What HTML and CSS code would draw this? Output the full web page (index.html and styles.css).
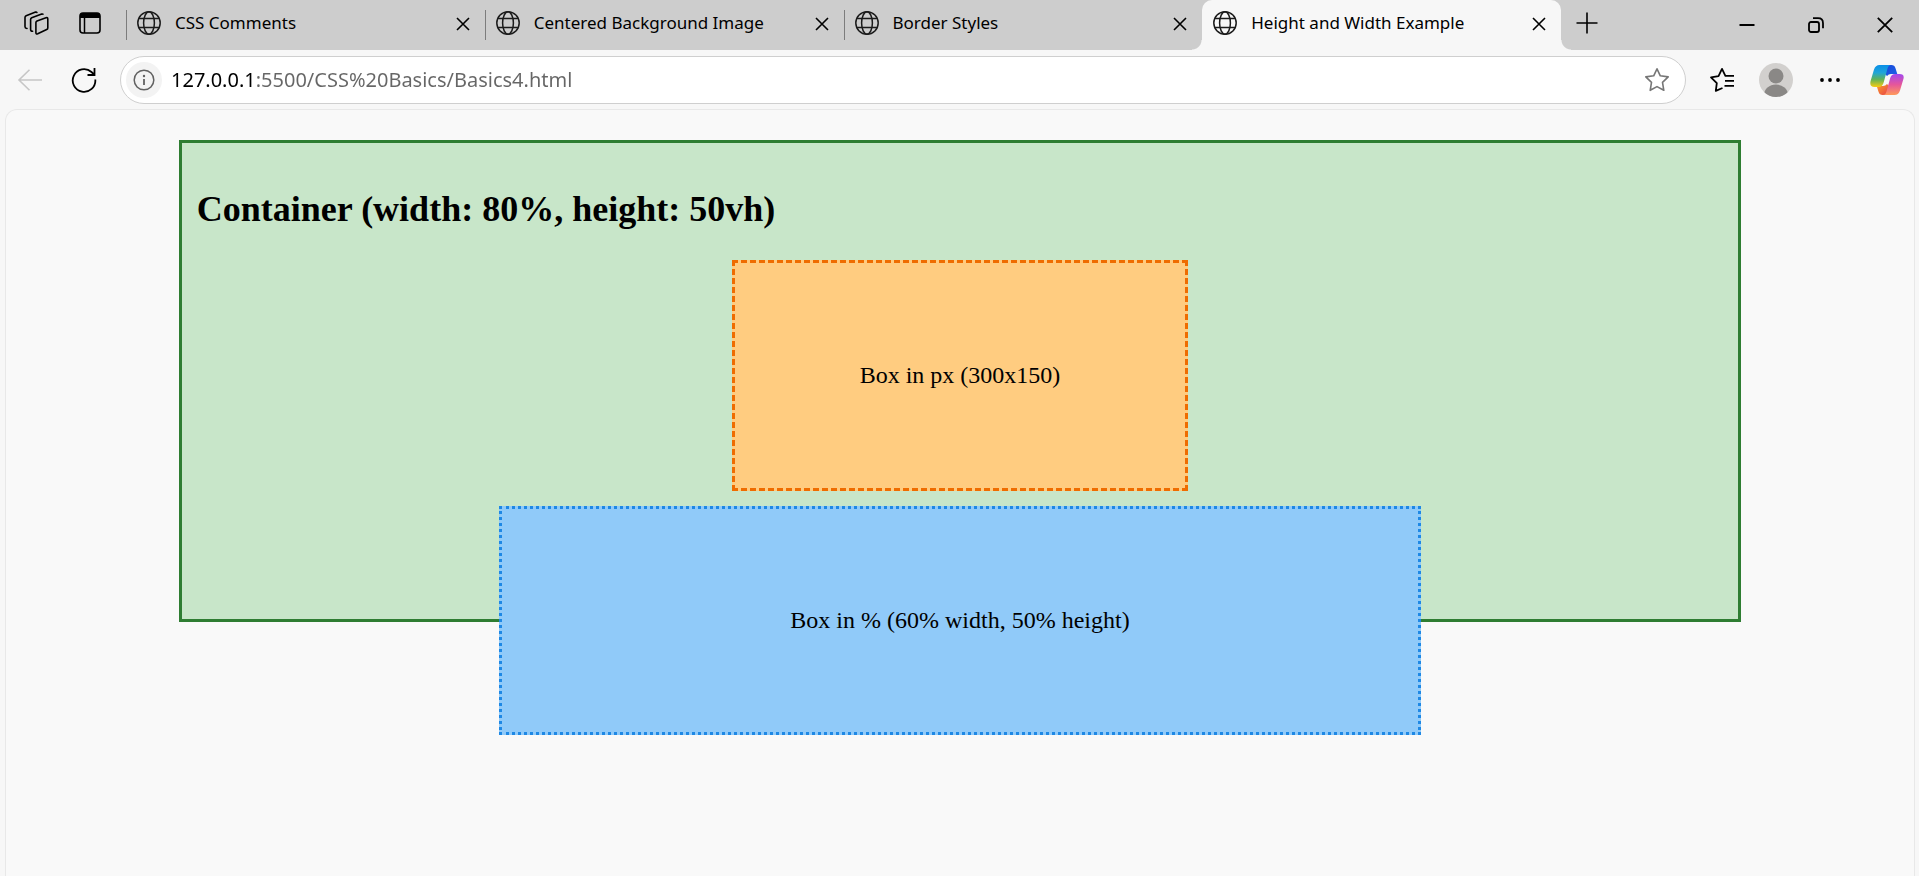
FILE: index.html
```html
<!DOCTYPE html>
<html lang="en">
<head>
<meta charset="utf-8">
<title>Height and Width Example</title>
<link rel="stylesheet" href="styles.css">
</head>
<body>
<svg class="defs" aria-hidden="true">
  <symbol id="globe" viewBox="0 0 24 24"><g fill="none" stroke="currentColor" stroke-width="1.5"><circle cx="12" cy="12" r="11.2"/><ellipse cx="12" cy="12" rx="5.4" ry="11.2"/><path d="M1.8 7.6h20.4M1.8 16.4h20.4"/></g></symbol>
  <symbol id="cross" viewBox="0 0 14 14"><path d="M1 1l12 12M13 1L1 13" fill="none" stroke="currentColor" stroke-width="1.6"/></symbol>
</svg>
<header class="tabstrip">
  <div class="tools">
    <button class="tool" aria-label="Workspaces"><svg width="26" height="26" viewBox="0 0 26 26" fill="none" stroke="currentColor" stroke-width="1.6" stroke-linejoin="round" stroke-linecap="round"><path d="M12.9 12.6q0-1.2 1.1-1.7l9-3.200q1.800-.5 1.800 1.200v9q0 1.200-1.100 1.700l-9 4.200q-1.800.6-1.800-1.200z"/><path d="M9.600 21.300q-2-.1-2-1.800v-10q0-1.200 1.100-1.700l10-3.700q.8-.2 1.200.1"/><path d="M4 18.500q-2-.3-2-1.800v-9.200q0-1.200 1.100-1.700l9.500-3.700q.9-.2 1.300.3"/></svg></button>
    <button class="tool" aria-label="Tab actions"><svg width="22" height="22" viewBox="0 0 22 22"><rect x="1" y="1" width="20" height="20" rx="3" fill="none" stroke="currentColor" stroke-width="1.6"/><path d="M1 6V4q0-3 3-3h14q3 0 3 3v2z" fill="currentColor"/><path d="M5.500 6v15" stroke="currentColor" stroke-width="1.5"/></svg></button>
  </div>
  <nav class="tabs" aria-label="Open tabs">
    <div class="tab"><button class="tab-title"><svg class="globe"><use href="#globe"/></svg><span>CSS Comments</span></button><button class="tab-close" aria-label="Close tab"><svg width="14" height="14"><use href="#cross"/></svg></button></div>
    <div class="tab"><button class="tab-title"><svg class="globe"><use href="#globe"/></svg><span>Centered Background Image</span></button><button class="tab-close" aria-label="Close tab"><svg width="14" height="14"><use href="#cross"/></svg></button></div>
    <div class="tab"><button class="tab-title"><svg class="globe"><use href="#globe"/></svg><span>Border Styles</span></button><button class="tab-close" aria-label="Close tab"><svg width="14" height="14"><use href="#cross"/></svg></button></div>
    <div class="tab active"><button class="tab-title"><svg class="globe"><use href="#globe"/></svg><span>Height and Width Example</span></button><button class="tab-close" aria-label="Close tab"><svg width="14" height="14"><use href="#cross"/></svg></button></div>
  </nav>
  <button class="new-tab" aria-label="New tab"><svg width="22" height="22" viewBox="0 0 22 22"><path d="M11 .5v21M.5 11h21" stroke="currentColor" stroke-width="1.6"/></svg></button>
  <div class="window-controls">
    <button aria-label="Minimize"><svg width="16" height="16" viewBox="0 0 16 16"><path d="M.5 8h15" stroke="currentColor" stroke-width="2"/></svg></button>
    <button aria-label="Restore"><svg width="16" height="16" viewBox="0 0 16 16" fill="none" stroke="currentColor" stroke-width="1.8"><rect x="1" y="5" width="10" height="10" rx="2"/><path d="M5 1.200h5q5 0 5 5v5"/></svg></button>
    <button aria-label="Close"><svg width="16" height="16" viewBox="0 0 16 16"><path d="M.8.8l14.400 14.400M15.200.8L.8 15.200" stroke="currentColor" stroke-width="1.8"/></svg></button>
  </div>
</header>
<div class="toolbar">
  <button class="bar-button back" aria-label="Back" disabled><svg width="26" height="22" viewBox="0 0 26 22" fill="none" stroke="currentColor" stroke-width="1.6"><path d="M12.500.8L2 11l10.500 10.200M2 11h23"/></svg></button>
  <button class="bar-button" aria-label="Reload"><svg width="26" height="26" viewBox="0 0 26 26" fill="none" stroke="currentColor" stroke-width="1.8"><path d="M24.300 12.500A11.300 11.300 0 1 1 20.500 5l3 2.800M23.500 1v7h-7"/></svg></button>
  <form class="address">
    <button class="site-info" type="button" aria-label="Site information"><svg width="22" height="22" viewBox="0 0 22 22"><circle cx="11" cy="11" r="9.800" fill="none" stroke="currentColor" stroke-width="1.5"/><path d="M11 10v6" stroke="currentColor" stroke-width="1.8"/><circle cx="11" cy="7" r="1.200" fill="currentColor"/></svg></button>
    <input class="url" type="text" aria-label="Address" value="127.0.0.1:5500/CSS%20Basics/Basics4.html">
    <button class="favorite" type="button" aria-label="Add to favorites"><svg width="26" height="26" viewBox="0 0 26 26"><path d="M13 1.800l3.300 7 7.900 1.100-5.700 5.400 1.300 8-6.800-3.700-6.800 3.700 1.300-8-5.700-5.400 7.900-1.100z" fill="none" stroke="currentColor" stroke-width="1.6" stroke-linejoin="round"/></svg></button>
  </form>
  <button class="bar-button" aria-label="Favorites"><svg width="26" height="26" viewBox="0 0 26 26" fill="none" stroke="currentColor" stroke-width="1.8" stroke-linejoin="round"><path d="M13.500 21l-6.700 2.800 1-7.700-5.800-5.800 7.500-1.100L13 1.900l3.400 6.900H25M16 13.800H25M15.500 18.800H25"/></svg></button>
  <button class="bar-button" aria-label="Profile"><svg width="34" height="34" viewBox="0 0 34 34"><defs><clipPath id="round"><circle cx="17" cy="17" r="17"/></clipPath></defs><circle cx="17" cy="17" r="17" fill="#d2d0ce"/><g clip-path="url(#round)" fill="#8a8886"><circle cx="17" cy="13" r="7.500"/><ellipse cx="17" cy="32" rx="12" ry="10.500"/></g></svg></button>
  <button class="bar-button" aria-label="Settings and more"><svg width="22" height="6" viewBox="0 0 22 6" fill="currentColor"><circle cx="3" cy="3" r="1.900"/><circle cx="11" cy="3" r="1.900"/><circle cx="19" cy="3" r="1.900"/></svg></button>
  <button class="bar-button copilot" aria-label="Copilot"><svg width="34" height="30" viewBox="0 0 34 30">
    <defs>
      <linearGradient id="cA" x1="0" y1="0" x2="0" y2="1"><stop offset="0" stop-color="#0a8fe8"/><stop offset=".35" stop-color="#1fa5d8"/><stop offset=".65" stop-color="#5eb25a"/><stop offset="1" stop-color="#f8cc10"/></linearGradient>
      <linearGradient id="cB" x1="0" y1="0" x2="0" y2="1"><stop offset="0" stop-color="#a348ee"/><stop offset=".5" stop-color="#e5569b"/><stop offset="1" stop-color="#ff9a5a"/></linearGradient>
      <linearGradient id="cC" x1="0" y1="0" x2="1" y2="1"><stop offset="0" stop-color="#1b48d8"/><stop offset="1" stop-color="#1a62e8"/></linearGradient>
      <linearGradient id="cD" x1="0" y1="0" x2="1" y2="1"><stop offset="0" stop-color="#fba028"/><stop offset="1" stop-color="#e8404a"/></linearGradient>
    </defs>
    <path d="M16 0h5.500q3 0 4 3.200L27.300 9H21q-2.500 0-4 2l-2-2z" fill="url(#cC)"/>
    <path d="M18 30h-5.500q-3 0-4-3.200L6.700 21H13q2.500 0 4-2l2 2z" fill="url(#cD)"/>
    <path d="M9.500 0H21q-2.500 0-3.500 3.500L13.800 17q-1.200 5-5 5H4.500Q-.8 22 .6 16L4 4.500Q5.500 0 9.500 0z" fill="url(#cA)"/>
    <path d="M24.500 30H13q2.500 0 3.500-3.500L20.200 13q1.200-4 5-4h4.300q5.300 0 3.900 5L30 25.500Q28.500 30 24.500 30z" fill="url(#cB)"/>
  </svg></button>
</div>
<main class="page">
  <section class="container">
    <h2>Container (width: 80%, height: 50vh)</h2>
    <div class="box box-px">Box in px (300x150)</div>
    <div class="box box-percent">Box in % (60% width, 50% height)</div>
  </section>
</main>
</body>
</html>
```
FILE: styles.css
```css
* { box-sizing: border-box; }

body {
  margin: 0;
  min-height: 100vh;
  display: flex;
  flex-direction: column;
  background: #f7f7f7;
  font-family: "Noto Sans", sans-serif;
  color: #000;
}

button {
  border: 0;
  padding: 0;
  background: none;
  font: inherit;
  color: inherit;
  display: flex;
  align-items: center;
  justify-content: center;
}

svg { display: block; flex: none; }
.defs { position: absolute; width: 0; height: 0; }

/* Tab strip */
.tabstrip {
  display: flex;
  height: 50px;
  background: #cdcdcd;
}

.tools { display: flex; padding: 0 9px; }
.tool { width: 54px; height: 46px; }

.tabs { display: flex; flex: 0 1 1435px; min-width: 0; }

.tab {
  flex: 1 1 0;
  min-width: 0;
  display: flex;
  height: 50px;
  padding: 0 12px 4px 11px;
  background: linear-gradient(#7c7c7c, #7c7c7c) 0 10px / 1px 30px no-repeat;
}

.tab-title {
  flex: 1;
  min-width: 0;
  justify-content: flex-start;
  gap: 14px;
  font-size: 17px;
  line-height: 24px;
}

.tab-title span { overflow: hidden; white-space: nowrap; }
.globe { width: 24px; height: 24px; color: #1b1b1b; }
.tab-close { width: 20px; padding-top: 2px; }

.tab.active {
  position: relative;
  background: #f7f7f7;
  border-radius: 10px 10px 0 0;
}

.tab.active::before,
.tab.active::after {
  content: "";
  position: absolute;
  bottom: 0;
  width: 10px;
  height: 10px;
}

.tab.active::before {
  right: 100%;
  background: radial-gradient(circle at 0 0, transparent 9px, #f7f7f7 10px);
}

.tab.active::after {
  left: 100%;
  background: radial-gradient(circle at 100% 0, transparent 9px, #f7f7f7 10px);
}

.new-tab { width: 52px; height: 45px; }
.window-controls { display: flex; margin-left: auto; }
.window-controls button { width: 69px; height: 49px; }

/* Toolbar */
.toolbar {
  display: flex;
  align-items: center;
  height: 59px;
  padding: 1px 2px 0 3px;
}

.bar-button { width: 54px; height: 48px; }
.back { color: #c6c6c6; }
.copilot { width: 60px; }

.address {
  flex: 1;
  min-width: 0;
  display: flex;
  align-items: center;
  height: 48px;
  margin: 0 9px;
  padding: 0 15px 0 5px;
  border: 1px solid #cfcfcf;
  border-radius: 24px;
  background: #fff;
}

.site-info {
  width: 36px;
  height: 36px;
  border-radius: 50%;
  background: #f3f3f3;
  color: #616161;
}

/* The host is darker than the rest of the address */
.url {
  flex: 1;
  min-width: 0;
  border: 0;
  padding: 0;
  margin: 0 9px;
  font: 20px/28px "Noto Sans", sans-serif;
  color: transparent;
  background: linear-gradient(to right, #000 86px, #666 86px);
  background-clip: text;
  -webkit-background-clip: text;
}

.favorite { color: #767676; }

/* Page */
.page {
  flex: 1;
  margin: 0 4px 0 5px;
  padding: 30px 0;
  border: 1px solid #e8e8e8;
  border-bottom: 0;
  border-radius: 12px 12px 0 0;
  background: #f9f9f9;
  font: 24px "Liberation Serif", serif;
}

.container {
  box-sizing: content-box;
  width: 80%;
  height: calc(51vh - 1px);
  margin: 0 auto;
  padding: 15px;
  border: 3px solid #2e7d32;
  background: #c8e6c9;
}

.container h2 { margin: 30px 0; font-size: 36px; line-height: 42px; }

.box {
  box-sizing: content-box;
  display: flex;
  align-items: center;
  justify-content: center;
  margin: 15px auto;
}

.box-px {
  width: 450px;
  height: 225px;
  border: 3px dashed #ef6c00;
  background: #ffcc80;
}

.box-percent {
  width: 60%;
  height: 50%;
  border: 3px dotted #1e88e5;
  background: #90caf9;
}
```
